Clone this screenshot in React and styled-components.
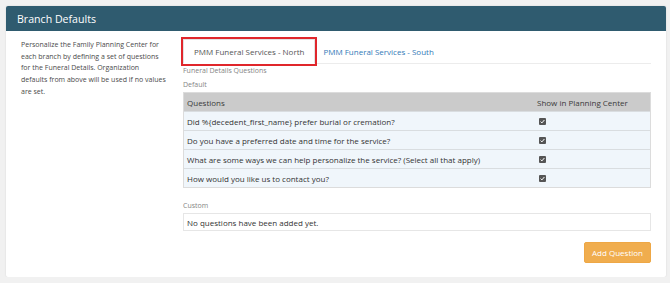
import React from "react";
import styled, { createGlobalStyle } from "styled-components";

const Global = createGlobalStyle`
  html, body { margin: 0; padding: 0; background: #f1f1f1; }
  body { font-family: "Open Sans", "Liberation Sans", sans-serif; }
  * { box-sizing: border-box; }
`;

const Page = styled.div`
  padding: 6px 4px 0 6px;
`;

const Card = styled.section`
  background: #fff;
  border-radius: 2px;
  box-shadow: 0 0 2px rgba(0, 0, 0, 0.12);
  overflow: hidden;
`;

const Header = styled.header`
  height: 25px;
  background: #2f5b6f;
  display: flex;
  align-items: center;
  padding-left: 11px;
  color: #fff;
  font-size: 10.6px;
`;

const Body = styled.div`
  display: grid;
  grid-template-columns: 146px 1fr;
  column-gap: 16px;
  padding: 8px 15px 14px 15px;
`;

const Intro = styled.p`
  margin: 0;
  font-size: 7px;
  line-height: 11.7px;
  color: #4a4a4a;
`;

const Main = styled.div`
  display: flex;
  flex-direction: column;
`;

const TabBar = styled.div`
  display: flex;
  align-items: stretch;
  border-bottom: 1px solid #ececec;
  height: 25px;
`;

const Tab = styled.div`
  display: flex;
  align-items: center;
  font-size: 8px;
  margin-bottom: ${(p) => (p.$active ? "-1px" : "0")};
  color: ${(p) => (p.$active ? "#555" : "#337ab7")};
  background: ${(p) => (p.$active ? "#fff" : "transparent")};
  border: 1px solid ${(p) => (p.$active ? "#e2e2e2" : "transparent")};
  border-bottom-color: transparent;
  outline: ${(p) => (p.$active ? "2px solid #e0262b" : "none")};
  padding: 0 10px 0 ${(p) => (p.$active ? "10px" : "7px")};
`;

const SmallLabel = styled.div`
  font-size: 7px;
  line-height: 9px;
  color: #858585;
  margin-top: ${(p) => p.$mt}px;
`;

const Table = styled.div`
  margin-top: 3px;
  border: 1px solid #dcdcdc;
  display: grid;
  grid-template-columns: 1fr 116px;
`;

const HeadCell = styled.div`
  background: #cbcbcb;
  height: 18px;
  display: flex;
  align-items: center;
  padding-left: 3px;
  font-size: 8px;
  color: #3a3a3a;
`;

const Cell = styled.div`
  background: #f0f6fb;
  height: 19px;
  border-top: 1px solid #d9dde0;
  display: flex;
  align-items: center;
  padding-left: 3px;
  font-size: 8px;
  color: #333;
  white-space: nowrap;
`;

const CheckCell = styled(Cell)`
  padding-left: 5px;
`;

const Check = () => (
  <svg width="7" height="7" viewBox="0 0 7 7">
    <rect x="0" y="0" width="7" height="7" rx="1" fill="#555" />
    <path d="M1.6 3.6 L2.9 4.9 L5.4 2" stroke="#fff" strokeWidth="1" fill="none" />
  </svg>
);

const EmptyBox = styled.div`
  margin-top: 3px;
  height: 18px;
  border: 1px solid #e6e6e6;
  display: flex;
  align-items: center;
  padding-left: 3px;
  font-size: 8px;
  color: #333;
`;

const Actions = styled.div`
  display: flex;
  justify-content: flex-end;
  margin-top: 11px;
`;

const Button = styled.button`
  height: 21px;
  padding: 0 7px;
  background: #f0ad4e;
  border: 1px solid #eea745;
  border-radius: 2px;
  color: #fff;
  font-family: "Open Sans", "Liberation Sans", sans-serif;
  font-size: 8px;
`;

const questions = [
  "Did %{decedent_first_name} prefer burial or cremation?",
  "Do you have a preferred date and time for the service?",
  "What are some ways we can help personalize the service? (Select all that apply)",
  "How would you like us to contact you?",
];

export default function App() {
  return (
    <>
      <Global />
      <Page>
        <Card>
          <Header>Branch Defaults</Header>
          <Body>
            <Intro>
              Personalize the Family Planning Center for each branch by defining a set of
              questions for the Funeral Details. Organization defaults from above will be used
              if no values are set.
            </Intro>
            <Main>
              <TabBar>
                <Tab $active>PMM Funeral Services - North</Tab>
                <Tab>PMM Funeral Services - South</Tab>
              </TabBar>
              <SmallLabel $mt={2}>Funeral Details Questions</SmallLabel>
              <SmallLabel $mt={5}>Default</SmallLabel>
              <Table>
                <HeadCell>Questions</HeadCell>
                <HeadCell>Show in Planning Center</HeadCell>
                {questions.map((q) => (
                  <React.Fragment key={q}>
                    <Cell>{q}</Cell>
                    <CheckCell>
                      <Check />
                    </CheckCell>
                  </React.Fragment>
                ))}
              </Table>
              <SmallLabel $mt={13}>Custom</SmallLabel>
              <EmptyBox>No questions have been added yet.</EmptyBox>
              <Actions>
                <Button>Add Question</Button>
              </Actions>
            </Main>
          </Body>
        </Card>
      </Page>
    </>
  );
}
